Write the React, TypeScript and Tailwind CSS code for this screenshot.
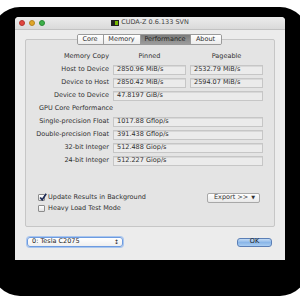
import React from 'react';

const font = { fontFamily: '"DejaVu Sans", "Liberation Sans", sans-serif' };

const ValueBox: React.FC<{ text: string; wide?: boolean }> = ({ text, wide }) => (
  <div
    className={`h-[10px] ${wide ? 'w-[150px]' : 'w-[73px]'} border border-[#c6c6c6] bg-[#ebebeb] pl-[3px] flex items-center leading-none text-[#303030] shadow-[inset_0_1px_0_#d8d8d8]`}
  >
    {text}
  </div>
);

const Row: React.FC<{ label: string; a: string; b?: string; wide?: boolean }> = ({ label, a, b, wide }) => (
  <div className="h-[13px] flex items-center">
    <div className="w-[84px] text-right pr-[1px] text-[#303030]">{label}</div>
    <div className="ml-[3px]">
      <ValueBox text={a} wide={wide} />
    </div>
    {b && (
      <div className="ml-[4px]">
        <ValueBox text={b} />
      </div>
    )}
  </div>
);

const Checkbox: React.FC<{ checked?: boolean; label: string }> = ({ checked, label }) => (
  <div className="h-[11px] flex items-center gap-[3px]">
    <div className="w-[7px] h-[7px] rounded-[1px] border border-[#8c8c8c] bg-gradient-to-b from-white to-[#e2e2e2] relative">
      {checked && (
        <svg viewBox="0 0 10 10" className="absolute -top-[2px] left-0 w-[8px] h-[8px]">
          <path d="M1.5 5.5 L4 8.5 L9 1" fill="none" stroke="#1d2a55" strokeWidth="2" />
        </svg>
      )}
    </div>
    <span className="text-[#303030]">{label}</span>
  </div>
);

const Tab: React.FC<{ label: string; w: string; active?: boolean; last?: boolean }> = ({ label, w, active, last }) => (
  <div
    className={`${w} h-full flex items-center justify-center ${last ? '' : 'border-r border-[#9a9a9a]'} ${
      active
        ? 'bg-gradient-to-b from-[#7c7c7c] to-[#9c9c9c] text-[#1e1e1e]'
        : 'bg-gradient-to-b from-white to-[#ececec] text-[#303030]'
    }`}
  >
    {label}
  </div>
);

export default function App() {
  return (
    <div className="w-[300px] h-[300px] bg-white relative overflow-hidden text-[6.5px]" style={font}>
      <div className="absolute left-[-8px] right-[-8px] top-[7px] bottom-[4px] rounded-[28px] bg-black" />
      <div className="relative pt-[17px] pl-[15px]">
        <div className="w-[270px] h-[243px] bg-[#ececec] rounded-t-[4px] flex flex-col overflow-hidden">
          {/* title bar */}
          <div className="h-[13px] relative flex items-center justify-center bg-gradient-to-b from-[#ececec] to-[#dadada] border-b border-[#c2c2c2]">
            <div className="absolute left-[4px] top-[3px] flex gap-[4px]">
              <div className="w-[6px] h-[6px] rounded-full bg-[#e2463f] border border-[#b3352f]" />
              <div className="w-[6px] h-[6px] rounded-full bg-[#e0a629] border border-[#b58322]" />
              <div className="w-[6px] h-[6px] rounded-full bg-[#3eb04a] border border-[#2c8a35]" />
            </div>
            <div className="flex items-center gap-[2px] text-[6.5px] text-[#444]">
              <svg viewBox="0 0 8 6" className="w-[8px] h-[6px]">
                <rect x="0" y="0" width="8" height="6" fill="#222" />
                <rect x="4" y="1" width="3" height="4" fill="#76b900" />
              </svg>
              <span>CUDA-Z 0.6.133 SVN</span>
            </div>
          </div>

          {/* group box */}
          <div className="mt-[9px] mx-[10px] h-[188px] border border-[#c6c6c6] rounded-[2px] bg-[#e4e4e4] flex flex-col">
            <div className="-mt-[6px] self-center mr-[2px] h-[11px] flex rounded-[2px] border border-[#9a9a9a] overflow-hidden">
              <Tab label="Core" w="w-[26px]" />
              <Tab label="Memory" w="w-[37px]" />
              <Tab label="Performance" w="w-[50px]" active />
              <Tab label="About" w="w-[30px]" last />
            </div>

            <div className="mt-[5px] flex flex-col">
              <div className="h-[13px] flex items-center">
                <div className="w-[84px] text-right pr-[1px] text-[#303030]">Memory Copy</div>
                <div className="ml-[3px] w-[73px] text-center text-[#303030]">Pinned</div>
                <div className="ml-[4px] w-[73px] text-center text-[#303030]">Pageable</div>
              </div>
              <Row label="Host to Device" a="2850.96 MiB/s" b="2532.79 MiB/s" />
              <Row label="Device to Host" a="2850.42 MiB/s" b="2594.07 MiB/s" />
              <Row label="Device to Device" a="47.8197 GiB/s" wide />
              <div className="h-[13px] flex items-center pl-[13px] text-[#303030]">GPU Core Performance</div>
              <Row label="Single-precision Float" a="1017.88 Gflop/s" wide />
              <Row label="Double-precision Float" a="391.438 Gflop/s" wide />
              <Row label="32-bit Integer" a="512.488 Giop/s" wide />
              <Row label="24-bit Integer" a="512.227 Giop/s" wide />
            </div>

            <div className="mt-[25px] flex items-start justify-between pl-[12px] pr-[14px]">
              <div className="flex flex-col">
                <Checkbox checked label="Update Results in Background" />
                <Checkbox label="Heavy Load Test Mode" />
              </div>
              <div className="mt-[1px] w-[53px] h-[10px] border border-[#a8a8a8] rounded-[2px] bg-gradient-to-b from-white to-[#e8e8e8] flex items-center justify-between pl-[6px] pr-[4px] text-[#303030]">
                <span>Export &gt;&gt;</span>
                <span className="text-[5px]">▼</span>
              </div>
            </div>
          </div>

          {/* bottom */}
          <div className="mt-[10px] flex items-center justify-between pl-[12px] pr-[13px]">
            <div className="w-[96px] h-[10px] rounded-[3px] border border-[#6d9be0] shadow-[0_0_0_1px_#a9c6ee] bg-gradient-to-b from-white to-[#efefef] flex items-center justify-between pl-[4px] pr-[3px] text-[#1f1f1f]">
              <span>0: Tesla C2075</span>
              <span className="text-[6px] leading-none">↕</span>
            </div>
            <div className="w-[35px] h-[9px] rounded-[3px] border border-[#5b7fb6] bg-gradient-to-b from-[#c4dbf4] via-[#8ab6e8] to-[#a9cdf2] flex items-center justify-center text-[#1a1a1a]">
              OK
            </div>
          </div>
        </div>
      </div>
    </div>
  );
}
